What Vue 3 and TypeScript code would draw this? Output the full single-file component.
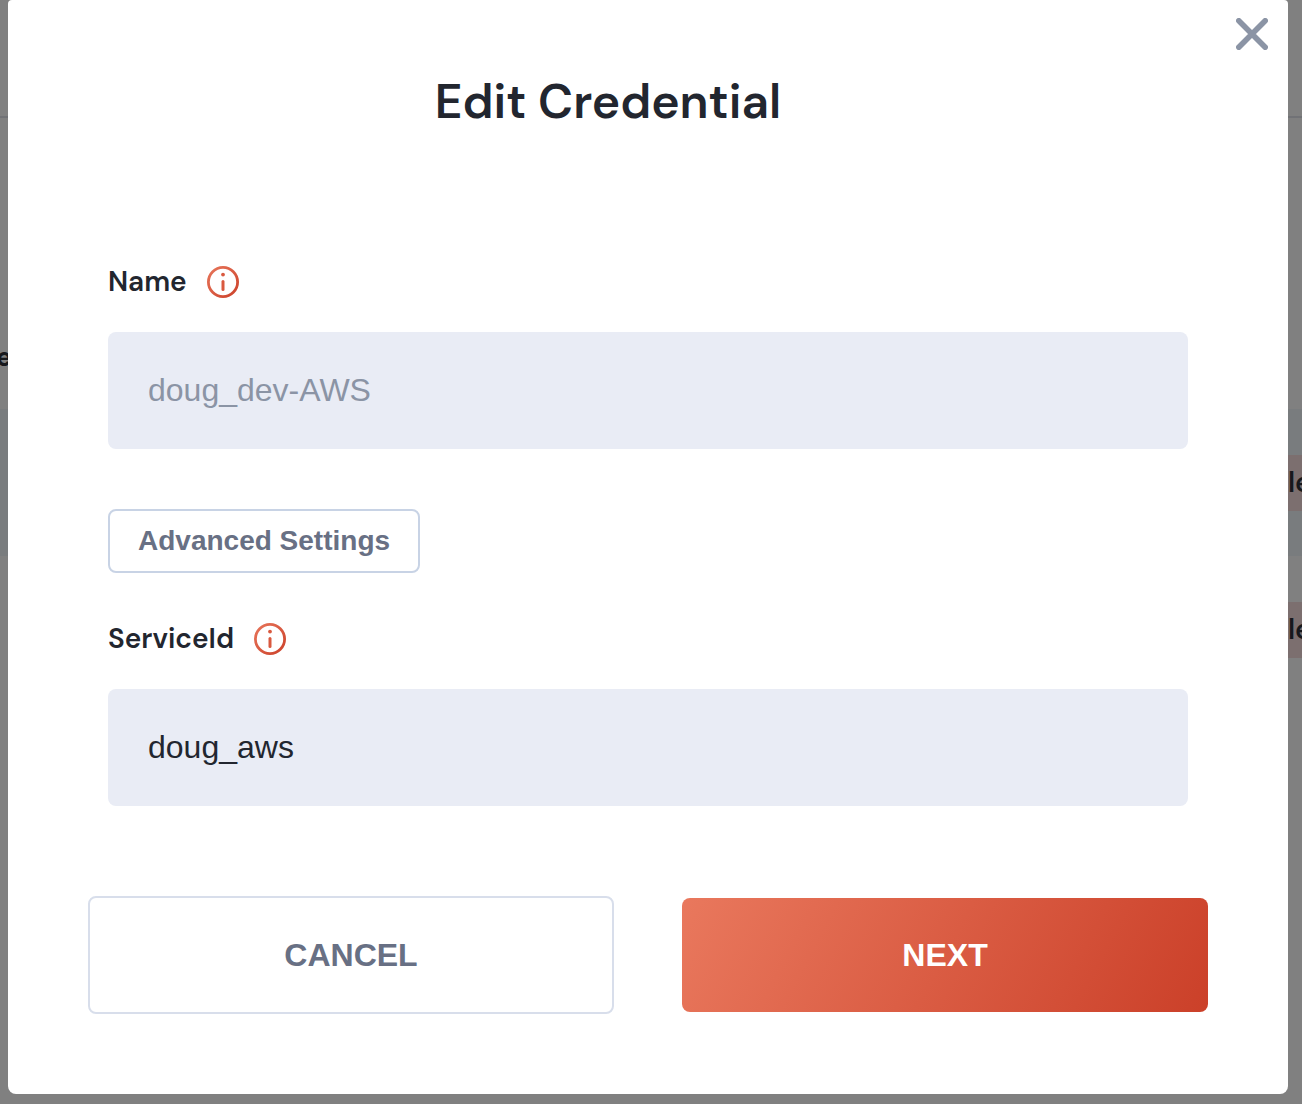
<script setup lang="ts">
import { ref } from 'vue'

interface Field {
  id: string
  label: string
  disabled: boolean
}

const nameField: Field = { id: 'name', label: 'Name', disabled: true }
const serviceField: Field = { id: 'service-id', label: 'ServiceId', disabled: false }

const name = ref('doug_dev-AWS')
const serviceId = ref('doug_aws')
const rows = [{ striped: true }, { striped: false }]
</script>

<template>
  <div class="screen">
    <div class="page" aria-hidden="true">
      <div class="page-bar"></div>
      <div class="page-head"><span>e</span></div>
      <div v-for="(row, i) in rows" :key="i" class="page-row" :class="{ striped: row.striped }">
        <span class="tag">le</span>
      </div>
    </div>

    <section class="dialog" role="dialog" aria-modal="true" aria-labelledby="dialog-title">
      <div class="close-row">
        <button class="close" type="button" aria-label="Close">
          <svg viewBox="0 0 32 32" width="32" height="32" fill="none" stroke="#8b94a5" stroke-width="5.6" stroke-linecap="round">
            <path d="M2.8 2.8 29.2 29.2M29.2 2.8 2.8 29.2" />
          </svg>
        </button>
      </div>
      <h1 id="dialog-title">Edit Credential</h1>

      <form @submit.prevent>
        <svg class="defs" width="0" height="0" aria-hidden="true">
          <defs>
            <linearGradient id="ember" x1="0" y1="0" x2="32" y2="32" gradientUnits="userSpaceOnUse">
              <stop offset="0" stop-color="#e8775c" />
              <stop offset="1" stop-color="#cb4029" />
            </linearGradient>
          </defs>
        </svg>
        <div class="fields">
          <div class="field">
            <div class="label-row">
              <label :for="nameField.id">{{ nameField.label }}</label>
              <svg class="info" viewBox="0 0 32 32" width="32" height="32" aria-hidden="true">
                <circle cx="16" cy="16" r="14.6" fill="none" stroke="url(#ember)" stroke-width="2.8" />
                <circle cx="16" cy="8.6" r="1.9" fill="#d9593f" />
                <path d="M16 15.6v8" stroke="#d9593f" stroke-width="3" stroke-linecap="round" />
              </svg>
            </div>
            <input :id="nameField.id" v-model="name" type="text" :disabled="nameField.disabled" />
          </div>
          <button class="advanced" type="button">Advanced Settings</button>
          <div class="field">
            <div class="label-row">
              <label :for="serviceField.id">{{ serviceField.label }}</label>
              <svg class="info" viewBox="0 0 32 32" width="32" height="32" aria-hidden="true">
                <circle cx="16" cy="16" r="14.6" fill="none" stroke="url(#ember)" stroke-width="2.8" />
                <circle cx="16" cy="8.6" r="1.9" fill="#d9593f" />
                <path d="M16 15.6v8" stroke="#d9593f" stroke-width="3" stroke-linecap="round" />
              </svg>
            </div>
            <input :id="serviceField.id" v-model="serviceId" type="text" :disabled="serviceField.disabled" />
          </div>
        </div>
        <div class="actions">
          <button class="cancel" type="button">CANCEL</button>
          <button class="next" type="submit">NEXT</button>
        </div>
      </form>
    </section>
  </div>
</template>

<style>
body {
  background: #808080;
}
</style>

<style scoped>
* {
  box-sizing: border-box;
}

.screen {
  position: relative;
  padding: 0 14px 10px 8px;
  font-family: "DM Sans", Inter, "Liberation Sans", sans-serif;
  color: #22262f;
}

.page {
  position: absolute;
  inset: 0;
  overflow: hidden;
  background: #808080;
  color: #17181c;
  font-size: 28px;
}

.page-bar {
  height: 118px;
  border-bottom: 2px solid #717276;
}

.page-head {
  display: flex;
  align-items: flex-end;
  height: 291px;
  padding-bottom: 36px;
  font-size: 26px;
  font-weight: 700;
  line-height: 32px;
}

.page-head span {
  display: flex;
  justify-content: flex-end;
  width: 12px;
}

.page-row {
  display: flex;
  align-items: center;
  justify-content: flex-end;
  height: 147px;
}

.page-row.striped {
  background: #797c7e;
}

.tag {
  width: 14px;
  overflow: hidden;
  background: #7c6f6f;
  font-weight: 600;
  line-height: 56px;
}

.dialog {
  position: relative;
  padding: 18px 80px 80px;
  border-radius: 4px 4px 8px 8px;
  background: #fff;
}

.close-row {
  display: flex;
  justify-content: flex-end;
  margin-right: -60px;
}

.close {
  padding: 0;
  border: 0;
  background: none;
}

.close svg,
.info {
  display: block;
}

h1 {
  margin: 22px 80px 134px 0;
  font-size: 48px;
  font-weight: 630;
  line-height: 60px;
  text-align: center;
}

.defs {
  display: block;
}

.fields {
  display: flex;
  flex-direction: column;
  align-items: flex-start;
  padding: 0 20px;
}

.field {
  width: 100%;
}

.label-row {
  display: flex;
  align-items: center;
  gap: 20px;
  margin-bottom: 34px;
}

label {
  font-size: 28px;
  font-weight: 630;
  line-height: 32px;
}

input {
  display: block;
  width: 100%;
  height: 117px;
  padding: 0 40px;
  border: 0;
  border-radius: 8px;
  background: #e9ecf5;
  color: #22262f;
  font: 32px "Liberation Sans", Arial, sans-serif;
}

input:disabled {
  color: #8b94a5;
}

button {
  font-family: "Liberation Sans", Arial, sans-serif;
  font-weight: 700;
}

.advanced {
  height: 64px;
  margin: 60px 0 50px;
  padding: 0 28px;
  border: 2px solid #c8d3e5;
  border-radius: 8px;
  background: #fff;
  color: #687084;
  font-size: 28px;
}

.actions {
  display: grid;
  grid-template-columns: 1fr 1fr;
  align-items: center;
  gap: 68px;
  margin-top: 90px;
}

.cancel,
.next {
  border-radius: 8px;
  font-size: 32px;
}

.cancel {
  height: 118px;
  border: 2px solid #d8deeb;
  background: #fff;
  color: #687084;
}

.next {
  height: 114px;
  border: 0;
  background: linear-gradient(118deg, #e9785d, #cb4029);
  color: #fff;
}
</style>
